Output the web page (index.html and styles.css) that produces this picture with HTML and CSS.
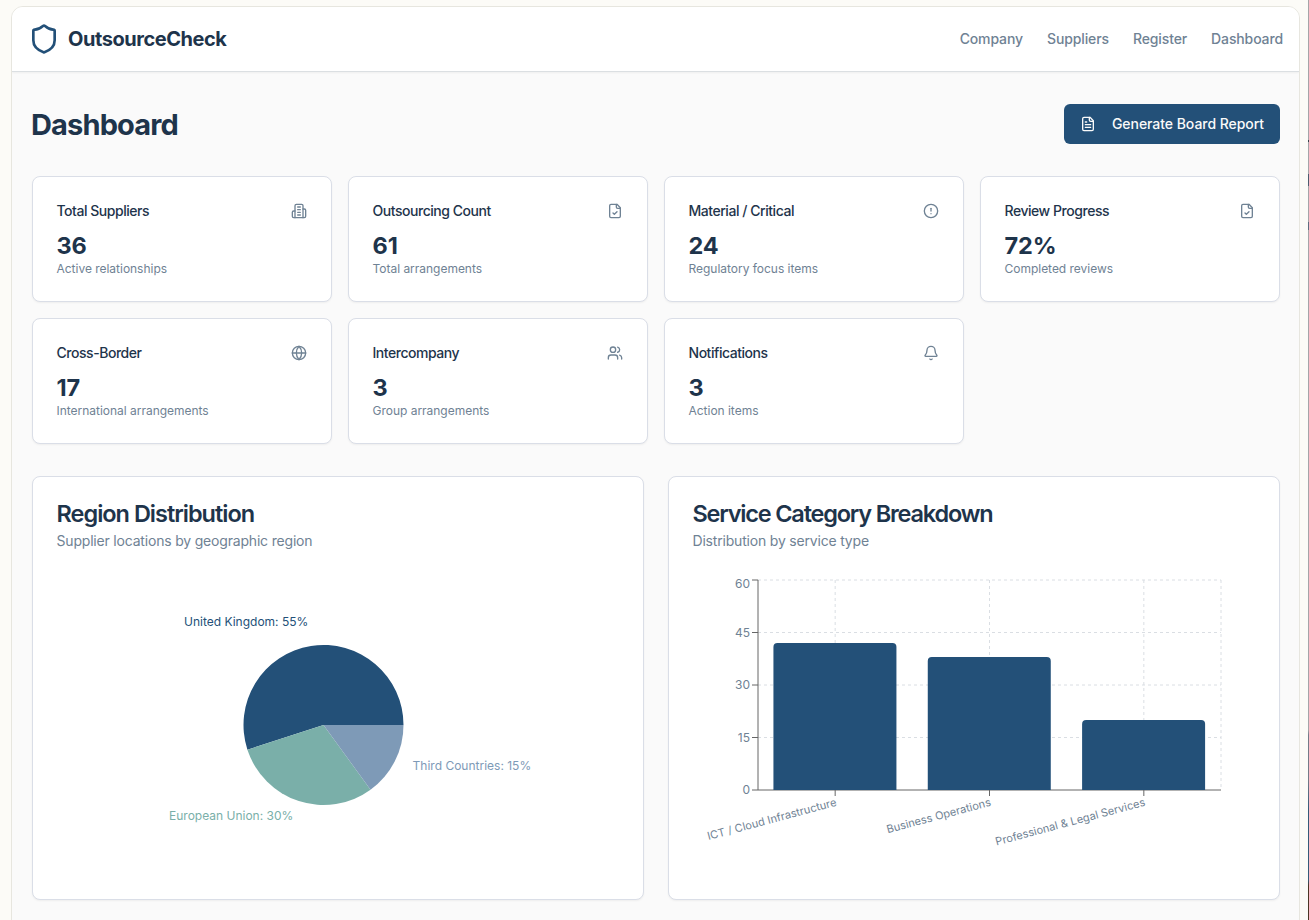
FILE: index.html
```html
<!DOCTYPE html>
<html lang="en">
<head>
  <meta charset="UTF-8" />
  <meta name="viewport" content="width=device-width, initial-scale=1.0" />
  <title>OutsourceCheck</title>
  <link rel="stylesheet" href="styles.css">
</head>
<body>
  <div class="frame">
    <header>
      <div class="brand">
        <svg class="logo" viewBox="0 0 24 24"><path d="M20 13c0 5-3.5 7.5-7.66 8.95a1 1 0 0 1-.67-.01C7.5 20.5 4 18 4 13V6a1 1 0 0 1 1-1c2 0 4.5-1.2 6.24-2.72a1.17 1.17 0 0 1 1.52 0C14.51 3.81 17 5 19 5a1 1 0 0 1 1 1z"/></svg>
        <span>OutsourceCheck</span>
      </div>
      <nav>
        <a>Company</a>
        <a>Suppliers</a>
        <a>Register</a>
        <a>Dashboard</a>
      </nav>
    </header>

    <main>
      <div class="title-row">
        <h1>Dashboard</h1>
        <button class="btn">
          <svg class="icon" viewBox="0 0 24 24"><path d="M15 2H6a2 2 0 0 0-2 2v16a2 2 0 0 0 2 2h12a2 2 0 0 0 2-2V7Z"/><path d="M14 2v4a2 2 0 0 0 2 2h4"/><path d="M10 9H8"/><path d="M16 13H8"/><path d="M16 17H8"/></svg>
          <span>Generate Board Report</span>
        </button>
      </div>

      <div class="stats">
        <div class="card stat">
          <div class="stat-head">
            <h3>Total Suppliers</h3>
            <svg class="icon" viewBox="0 0 24 24"><path d="M6 22V4a2 2 0 0 1 2-2h8a2 2 0 0 1 2 2v18Z"/><path d="M6 12H4a2 2 0 0 0-2 2v6a2 2 0 0 0 2 2h2"/><path d="M18 9h2a2 2 0 0 1 2 2v9a2 2 0 0 1-2 2h-2"/><path d="M10 6h4"/><path d="M10 10h4"/><path d="M10 14h4"/><path d="M10 18h4"/></svg>
          </div>
          <div class="value">36</div>
          <p>Active relationships</p>
        </div>
        <div class="card stat">
          <div class="stat-head">
            <h3>Outsourcing Count</h3>
            <svg class="icon" viewBox="0 0 24 24"><path d="M15 2H6a2 2 0 0 0-2 2v16a2 2 0 0 0 2 2h12a2 2 0 0 0 2-2V7Z"/><path d="M14 2v4a2 2 0 0 0 2 2h4"/><path d="m9 15 2 2 4-4"/></svg>
          </div>
          <div class="value">61</div>
          <p>Total arrangements</p>
        </div>
        <div class="card stat">
          <div class="stat-head">
            <h3>Material / Critical</h3>
            <svg class="icon" viewBox="0 0 24 24"><circle cx="12" cy="12" r="10"/><path d="M12 8v4"/><path d="M12 16h.01"/></svg>
          </div>
          <div class="value">24</div>
          <p>Regulatory focus items</p>
        </div>
        <div class="card stat">
          <div class="stat-head">
            <h3>Review Progress</h3>
            <svg class="icon" viewBox="0 0 24 24"><path d="M15 2H6a2 2 0 0 0-2 2v16a2 2 0 0 0 2 2h12a2 2 0 0 0 2-2V7Z"/><path d="M14 2v4a2 2 0 0 0 2 2h4"/><path d="m9 15 2 2 4-4"/></svg>
          </div>
          <div class="value">72%</div>
          <p>Completed reviews</p>
        </div>
        <div class="card stat">
          <div class="stat-head">
            <h3>Cross-Border</h3>
            <svg class="icon" viewBox="0 0 24 24"><circle cx="12" cy="12" r="10"/><path d="M12 2a14.5 14.5 0 0 0 0 20 14.5 14.5 0 0 0 0-20"/><path d="M2 12h20"/></svg>
          </div>
          <div class="value">17</div>
          <p>International arrangements</p>
        </div>
        <div class="card stat">
          <div class="stat-head">
            <h3>Intercompany</h3>
            <svg class="icon" viewBox="0 0 24 24"><path d="M16 21v-2a4 4 0 0 0-4-4H6a4 4 0 0 0-4 4v2"/><circle cx="9" cy="7" r="4"/><path d="M22 21v-2a4 4 0 0 0-3-3.87"/><path d="M16 3.13a4 4 0 0 1 0 7.75"/></svg>
          </div>
          <div class="value">3</div>
          <p>Group arrangements</p>
        </div>
        <div class="card stat">
          <div class="stat-head">
            <h3>Notifications</h3>
            <svg class="icon" viewBox="0 0 24 24"><path d="M10.268 21a2 2 0 0 0 3.464 0"/><path d="M3.262 15.326A1 1 0 0 0 4 17h16a1 1 0 0 0 .74-1.673C19.41 13.956 18 12.499 18 8A6 6 0 0 0 6 8c0 4.499-1.411 5.956-2.738 7.326"/></svg>
          </div>
          <div class="value">3</div>
          <p>Action items</p>
        </div>
      </div>

      <div class="charts">
        <div class="card chart-card">
          <h2>Region Distribution</h2>
          <p>Supplier locations by geographic region</p>
          <svg class="chart" viewBox="0 0 562 300">
            <path class="uk" d="M266.5 150L346.5 150A80 80 0 1 0 190.42 174.72Z"/>
            <path class="eu" d="M266.5 150L190.42 174.72A80 80 0 0 0 313.52 214.72Z"/>
            <path class="third" d="M266.5 150L313.52 214.72A80 80 0 0 0 346.5 150Z"/>
            <text class="uk end" x="251.3" y="51">United Kingdom: 55%</text>
            <text class="eu end" x="236.3" y="245">European Union: 30%</text>
            <text class="third" x="355.6" y="195">Third Countries: 15%</text>
          </svg>
        </div>

        <div class="card chart-card">
          <h2 class="tight">Service Category Breakdown</h2>
          <p>Distribution by service type</p>
          <svg class="chart" viewBox="0 0 562 300">
            <g class="grid">
              <path d="M65 5H528"/><path d="M65 57.5H528"/><path d="M65 110H528"/><path d="M65 162.5H528"/>
              <path d="M142.17 5V215"/><path d="M296.5 5V215"/><path d="M450.83 5V215"/><path d="M528 5V215"/>
            </g>
            <g class="axis">
              <path d="M65 5V215"/><path d="M65 215H528"/>
              <path d="M59 5H65"/><path d="M59 57.5H65"/><path d="M59 110H65"/><path d="M59 162.5H65"/><path d="M59 215H65"/>
              <path d="M142.17 215V221"/><path d="M296.5 215V221"/><path d="M450.83 215V221"/>
            </g>
            <g class="uk">
              <path d="M80.43 215V72a4 4 0 0 1 4-4h115a4 4 0 0 1 4 4V215Z"/>
              <path d="M234.77 215V86a4 4 0 0 1 4-4h115a4 4 0 0 1 4 4V215Z"/>
              <path d="M389.1 215V149a4 4 0 0 1 4-4h115a4 4 0 0 1 4 4V215Z"/>
            </g>
            <g class="ticks end">
              <text x="57" y="13">60</text>
              <text x="57" y="62">45</text>
              <text x="57" y="114.3">30</text>
              <text x="57" y="167">15</text>
              <text x="57" y="219.3">0</text>
            </g>
            <g class="ticks names end">
              <text x="142.17" y="223" dy="0.71em" transform="rotate(-15 142.17 223)">ICT / Cloud Infrastructure</text>
              <text x="296.5" y="223" dy="0.71em" transform="rotate(-15 296.5 223)">Business Operations</text>
              <text x="450.83" y="223" dy="0.71em" transform="rotate(-15 450.83 223)">Professional &amp; Legal Services</text>
            </g>
          </svg>
        </div>
      </div>
    </main>
  </div>
</body>
</html>
```
FILE: styles.css
```css
* { box-sizing: border-box; margin: 0; padding: 0; }
body {
  height: 920px;
  overflow: hidden;
  padding: 6px 9px 0 11px;
  background:
    linear-gradient(#a5a5a8 0 140px, #35414d 140px 142px, #a5a5a8 142px 174px, #4d5d70 174px 186px, #a5a5a8 186px 222px, #5f6d80 222px 230px, #a5a5a8 230px 730px, #747b88 735px 780px, #345a78 810px 880px, #4b3525 886px) right top / 1px 100% no-repeat,
    #fcfbf7;
  font-family: 'Inter', sans-serif;
  color: #1e344b;
}
.frame {
  height: 960px;
  border: 1px solid #e7e6df;
  border-radius: 12px;
  background: #fafafa;
  overflow: hidden;
}
header {
  height: 65px;
  display: flex;
  align-items: center;
  justify-content: space-between;
  padding: 0 16px;
  background: #fff;
  border-bottom: 1px solid #dbdfe2;
  box-shadow: 0 1px 2px rgba(0,0,0,0.05);
}
.brand { display: flex; align-items: center; gap: 8px; font-size: 20px; font-weight: 700; letter-spacing: -0.45px; }
.logo { width: 32px; height: 32px; fill: none; stroke: #235078; stroke-width: 2; stroke-linecap: round; stroke-linejoin: round; }
nav { display: flex; gap: 24px; padding-bottom: 2px; font-size: 14px; font-weight: 500; letter-spacing: -0.12px; color: #6f8294; }

main { padding: 32px 19px 32px 20px; }
.title-row { display: flex; align-items: center; justify-content: space-between; margin-bottom: 32px; }
h1 { font-size: 29px; line-height: 36px; font-weight: 700; letter-spacing: -0.85px; padding-top: 2px; margin-left: -1px; }
.btn {
  display: flex;
  align-items: center;
  gap: 16px;
  height: 40px;
  padding: 0 16px;
  border: none;
  border-radius: 6px;
  background: #235078;
  color: #fafafa;
  font: 500 14px 'Inter', sans-serif;
  letter-spacing: -0.05px;
}
.btn span { padding-bottom: 2px; }
.icon { width: 16px; height: 16px; fill: none; stroke: currentColor; stroke-width: 2; stroke-linecap: round; stroke-linejoin: round; }

.card { background: #fff; border: 1px solid #dadee7; border-radius: 8px; padding: 24px; box-shadow: 0 1px 2px rgba(0,0,0,0.05); }
.stats { display: grid; grid-template-columns: repeat(4, 1fr); gap: 16px; margin-bottom: 32px; }
.stat { height: 126px; padding-left: 23.5px; }
.stat-head { display: flex; align-items: center; justify-content: space-between; height: 20px; margin-bottom: 8px; }
.stat-head .icon { color: #6f8294; }
h3 { font-size: 14px; font-weight: 500; letter-spacing: -0.46px; padding-bottom: 2px; }
.value { font-size: 23.5px; line-height: 34px; font-weight: 700; letter-spacing: -0.1px; margin-bottom: -2px; }
.stat p { font-size: 12px; line-height: 16px; letter-spacing: -0.02px; color: #6f8294; }

.charts { display: grid; grid-template-columns: 1fr 1fr; gap: 24px; }
.chart-card { height: 424px; }
h2 { font-size: 23.5px; line-height: 26px; font-weight: 600; letter-spacing: -1px; margin: 0 0 4px -0.5px; }
h2.tight { letter-spacing: -1.2px; }
.chart-card p { font-size: 14px; line-height: 20px; letter-spacing: -0.19px; color: #6f8294; margin: 0 0 24px -0.5px; }
.chart { display: block; width: 562px; height: 300px; font-size: 12px; }
.uk { fill: #235078; }
.eu { fill: #7aafa9; }
.third { fill: #7e9ab7; }
.end { text-anchor: end; }
.grid { fill: none; stroke: #dadee3; stroke-dasharray: 3 3; }
.axis { fill: none; stroke: #666; }
.ticks { fill: #6f8294; }
.names { font-size: 11px; letter-spacing: 0.03px; }
```
